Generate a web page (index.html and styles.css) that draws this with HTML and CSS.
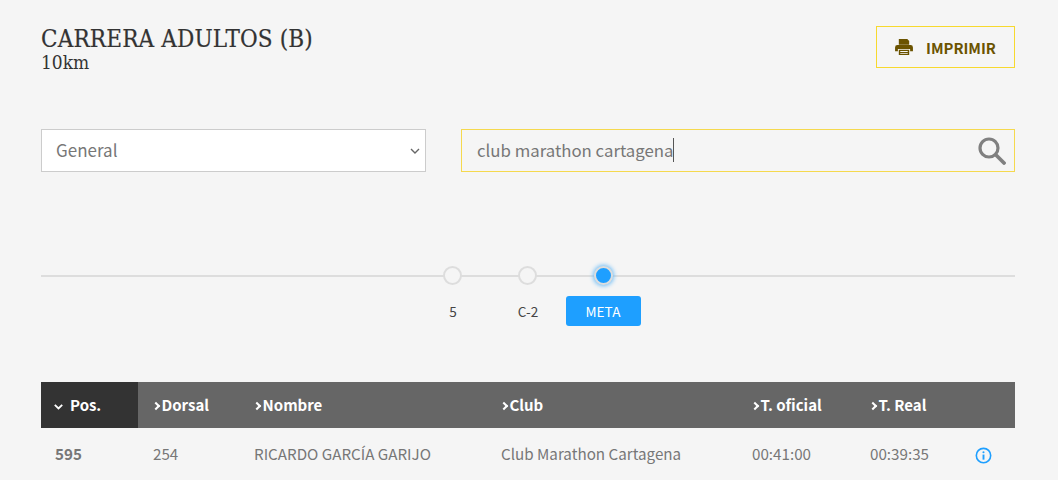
FILE: index.html
```html
<!DOCTYPE html>
<html lang="es">
<head>
    <meta charset="UTF-8">
    <meta name="viewport" content="width=device-width, initial-scale=1.0">
    <title>Carrera Adultos (B)</title>
    <link rel="stylesheet" href="styles.css">
</head>
<body>

<div id="resultsContainer">
    <div class="raceHeader">
        <div>
            <h1>CARRERA ADULTOS (B)</h1>
            <h2>10km</h2>
        </div>
        <button class="print-button">
            <svg class="printIcon" width="18" height="16" viewBox="0 0 19 17">
                <path fill="#6b5300" d="M4 0h9l2 2v4H4zM2.500 6.500h14a2.500 2.500 0 0 1 2.500 2.500v4h-3v-2.500H3V13H0V9a2.500 2.500 0 0 1 2.500-2.500z"/>
                <path fill="#6b5300" d="M4 11.500h11V17H4zM5.500 12.800v1h8v-1zm0 2v1h8v-1z"/>
            </svg>
            IMPRIMIR
        </button>
    </div>

    <div class="filters">
        <div class="selectWrap">
            <select class="categorySelect">
                <option selected>General</option>
            </select>
            <svg class="selectArrow" width="10" height="6" viewBox="0 0 10 6">
                <path d="M1 1l4 4 4-4" fill="none" stroke="#666" stroke-width="1.400"/>
            </svg>
        </div>
        <div class="searchBox">
            <span class="searchText">club marathon cartagena</span>
            <svg class="searchIcon" width="28" height="28" viewBox="0 0 28 28">
                <circle cx="11" cy="11" r="9" fill="none" stroke="#808080" stroke-width="3.200"/>
                <path d="M18 18l8 8" fill="none" stroke="#808080" stroke-width="3.800" stroke-linecap="round"/>
            </svg>
        </div>
    </div>

    <div class="timeline">
        <div class="dots">
            <div class="stop"><span class="dot"></span></div>
            <div class="stop"><span class="dot"></span></div>
            <div class="stop lastStop"><span class="dot active"></span></div>
        </div>
        <div class="labels">
            <div class="stop"><span class="stopLabel">5</span></div>
            <div class="stop"><span class="stopLabel">C-2</span></div>
            <div class="stop"><span class="stopLabel activeLabel">META</span></div>
        </div>
    </div>

    <table class="resultsTable">
        <thead>
            <tr>
                <th class="colPos sorted"><svg class="sortIcon" width="9" height="6" viewBox="0 0 9 6"><path d="M0.800 0.800l3.700 3.700 3.700-3.700" fill="none" stroke="#fff" stroke-width="1.800"/></svg>Pos.</th>
                <th class="colDorsal sortable">Dorsal</th>
                <th class="colNombre sortable">Nombre</th>
                <th class="colClub sortable">Club</th>
                <th class="colOficial sortable">T. oficial</th>
                <th class="colReal sortable">T. Real</th>
                <th class="colInfo"></th>
            </tr>
        </thead>
        <tbody>
            <tr>
                <td class="posCell">595</td>
                <td>254</td>
                <td>RICARDO GARCÍA GARIJO</td>
                <td>Club Marathon Cartagena</td>
                <td>00:41:00</td>
                <td>00:39:35</td>
                <td>
                    <svg class="infoIcon" width="17" height="17" viewBox="0 0 18 18">
                        <circle cx="9" cy="9" r="7.600" fill="none" stroke="#1e9fff" stroke-width="1.700"/>
                        <circle cx="9" cy="5.600" r="1.100" fill="#1e9fff"/>
                        <path d="M9 8v5.400" stroke="#1e9fff" stroke-width="2"/>
                    </svg>
                </td>
            </tr>
        </tbody>
    </table>
</div>

</body>
</html>
```

FILE: styles.css
```css
html, body {
    margin: 0;
    height: 480px;
    overflow: hidden;
    background-color: #f5f5f5;
}

#resultsContainer {
    padding: 26px 43px 0 41px;
    font-family: "Noto Sans CJK SC", "Noto Sans", sans-serif;
    color: #777;
}

.raceHeader {
    display: flex;
    justify-content: space-between;
    align-items: flex-start;
    height: 103px;
}

h1 {
    margin: 0;
    font-family: "DejaVu Serif", serif;
    font-stretch: condensed;
    font-size: 24px;
    font-weight: 400;
    line-height: 26px;
    letter-spacing: 0.15px;
    color: #333;
    -webkit-text-stroke: 0.2px #333;
}

h2 {
    margin: 0;
    font-family: "DejaVu Serif", serif;
    font-stretch: condensed;
    font-size: 19px;
    font-weight: 400;
    line-height: 20px;
    color: #333;
}

.print-button {
    display: flex;
    align-items: center;
    justify-content: center;
    gap: 13px;
    box-sizing: border-box;
    width: 139px;
    height: 42px;
    padding: 0;
    background: transparent;
    border: 1px solid #f7d92e;
    font-family: inherit;
    font-size: 14.800px;
    font-weight: 700;
    color: #6b5300;
}

.filters {
    display: flex;
    gap: 35px;
    height: 43px;
}

.selectWrap {
    position: relative;
    width: 385px;
}

.categorySelect {
    display: block;
    box-sizing: border-box;
    width: 100%;
    height: 43px;
    padding: 0 14px 2px;
    appearance: none;
    background-color: #fff;
    border: 1px solid #ccc;
    border-radius: 0;
    font-family: inherit;
    font-size: 17px;
    color: #777;
}

.selectArrow {
    position: absolute;
    top: 19px;
    right: 6px;
}

.searchBox {
    display: flex;
    align-items: center;
    justify-content: space-between;
    flex: 1;
    box-sizing: border-box;
    padding: 0 8px 0 15px;
    border: 1px solid #f5d94e;
    font-size: 16.800px;
}

.searchText {
    margin-bottom: 2px;
    border-right: 1px solid #555;
    line-height: 24px;
}

.timeline {
    margin-top: 93px;
}

.dots, .labels {
    display: flex;
    justify-content: center;
}

.dots {
    height: 20px;
    background: linear-gradient(#ddd, #ddd) 0 10px / 100% 2px no-repeat;
}

.labels {
    margin-top: 11px;
}

.stop {
    display: flex;
    align-items: center;
    justify-content: center;
    width: 75px;
}

.lastStop {
    width: 76px;
}

.dot {
    box-sizing: border-box;
    width: 19px;
    height: 19px;
    background-color: #f5f5f5;
    border: 2px solid #ddd;
    border-radius: 50%;
}

.dot.active {
    background-color: #1e9fff;
    box-shadow: 0 0 4px 1px #6dbdf7;
}

.stopLabel {
    width: 100%;
    height: 30px;
    font-size: 13.600px;
    line-height: 30px;
    text-align: center;
    color: #444;
}

.activeLabel {
    background-color: #1e9fff;
    border-radius: 3px;
    color: #fff;
}

.resultsTable {
    width: 100%;
    margin-top: 56px;
    table-layout: fixed;
    border-collapse: collapse;
}

.resultsTable th {
    height: 44px;
    padding: 0 0 2px 15px;
    background-color: #666;
    font-size: 15px;
    font-weight: 700;
    text-align: left;
    color: #fff;
}

.resultsTable td {
    height: 50px;
    padding: 0 0 2px 15px;
    font-size: 15.200px;
    color: #777;
}

.resultsTable th.sorted {
    padding-left: 13px;
    background-color: #333;
}

.sortable::before {
    content: "";
    display: inline-block;
    box-sizing: border-box;
    width: 6px;
    height: 6px;
    margin: 0 3px 0 -0.500px;
    vertical-align: 2px;
    border-top: 2px solid #fff;
    border-right: 2px solid #fff;
    transform: rotate(45deg);
}

.colPos { width: 84px; }
.colDorsal { width: 86px; }
.colNombre { width: 232px; }
.colClub { width: 236px; }
.colOficial { width: 103px; }
.colReal { width: 90px; }

.sortIcon {
    margin-right: 7px;
    vertical-align: 1px;
}

.resultsTable td.posCell {
    padding-left: 14px;
    font-weight: 700;
}

.infoIcon {
    display: block;
    margin-top: 5px;
}
```
